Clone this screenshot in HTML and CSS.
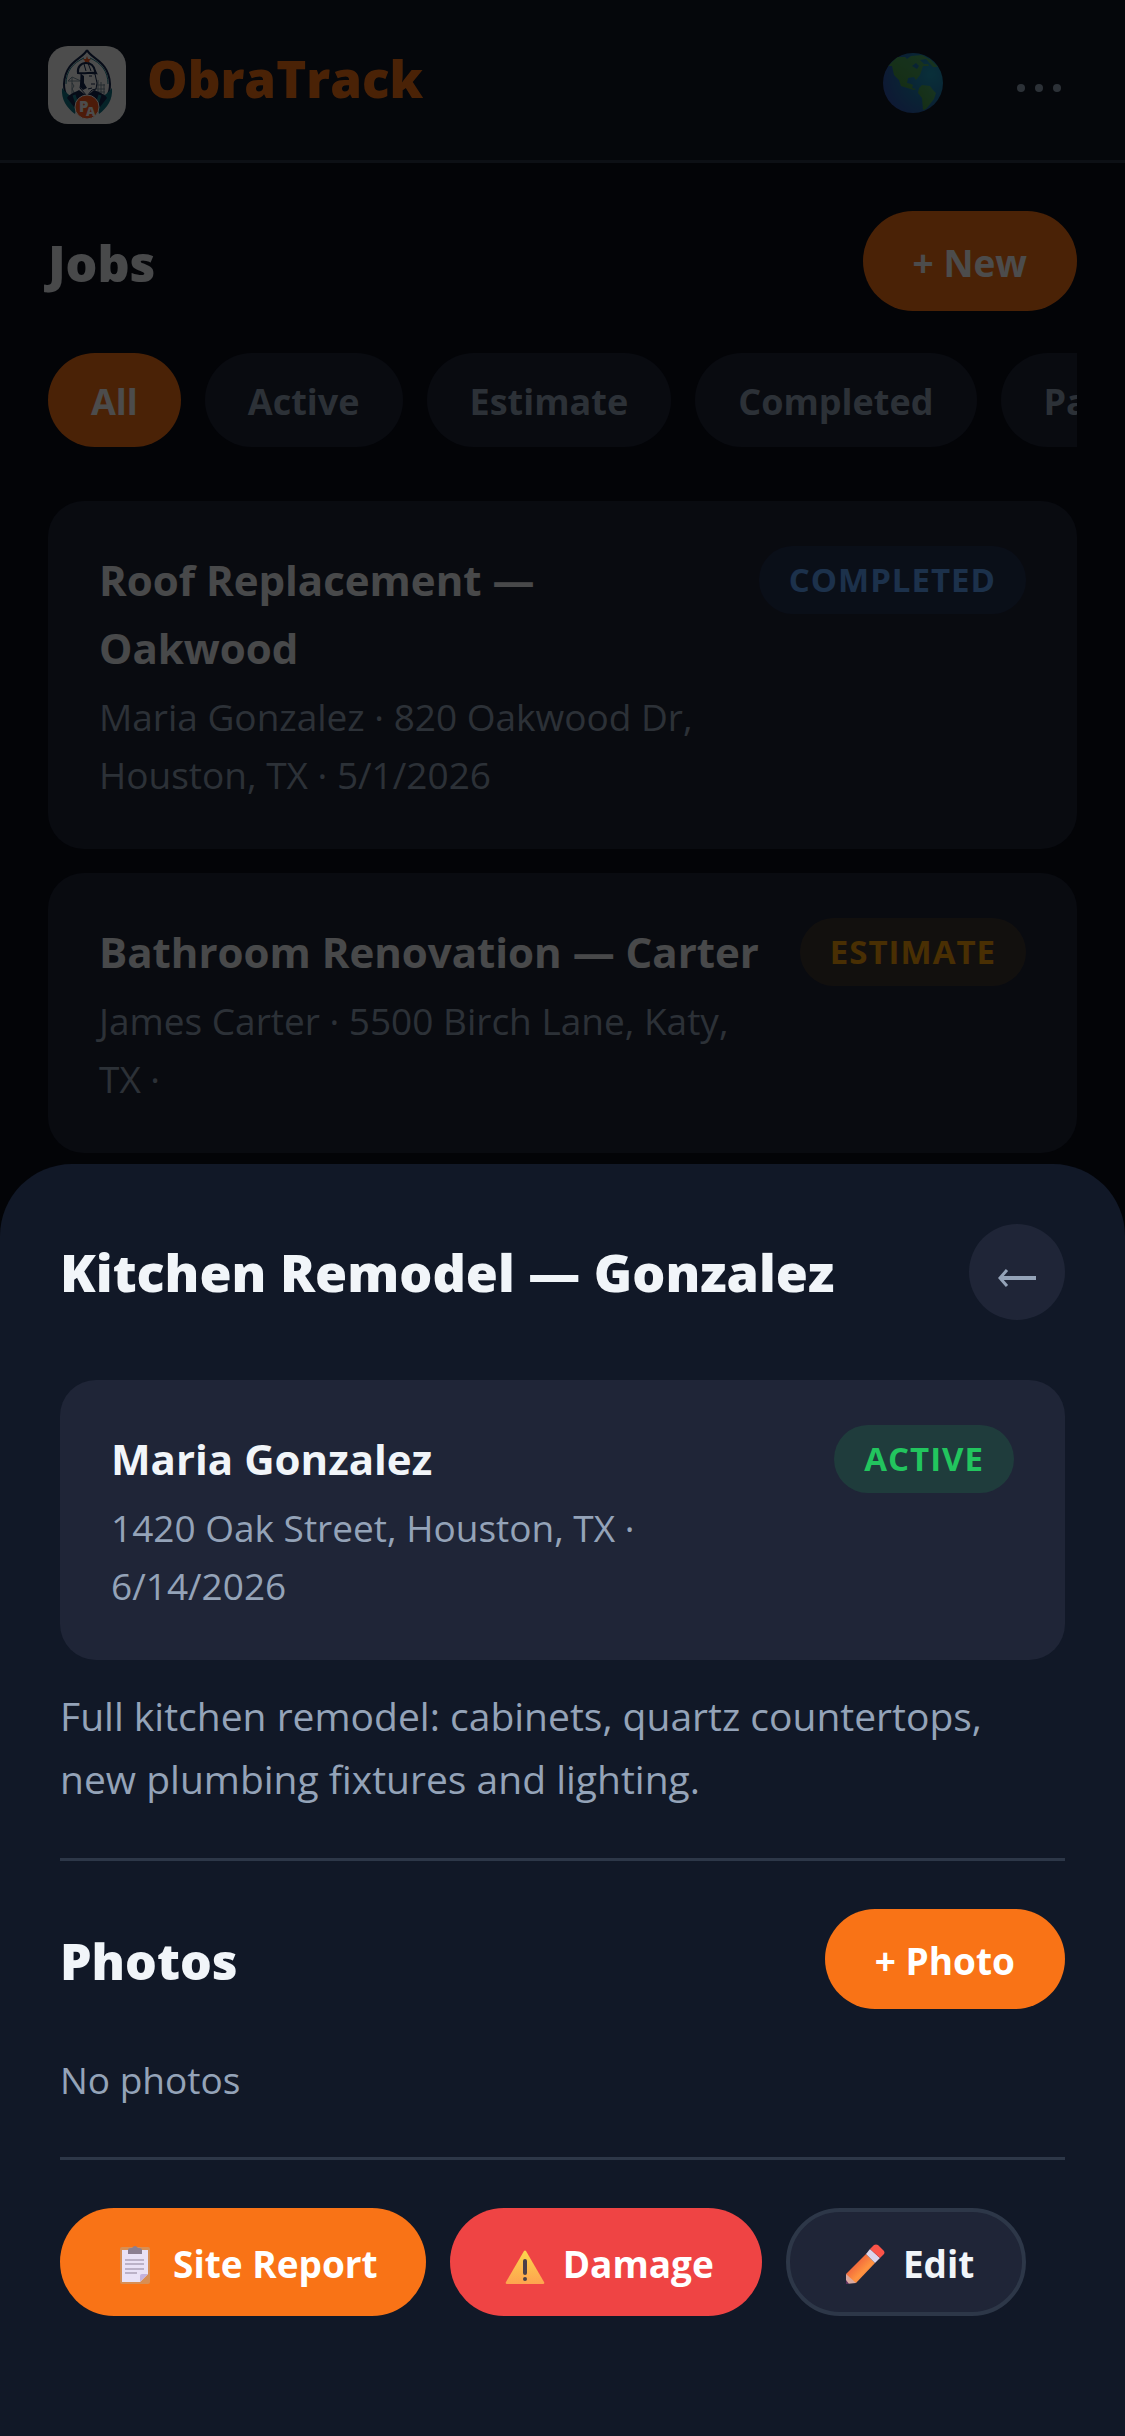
FILE: index.html
```html
<!DOCTYPE html>
<html lang="en">
<head>
  <meta charset="UTF-8">
  <meta name="viewport" content="width=device-width, initial-scale=1.0">
  <title>ObraTrack</title>
  <link rel="stylesheet" href="styles.css">
</head>
<body>
  <header class="header">
    <div class="brand">
      <svg class="logo" viewBox="0 0 78 78" role="img" aria-label="PA logo">
        <rect width="78" height="78" rx="20" fill="#fff"/>
        <!-- pointed frame -->
        <path d="M39 4C35 13 17 15 16 38c0 5 1 9 3 12M39 4c4 9 22 11 23 34 0 5-1 9-3 12" fill="none" stroke="#14264f" stroke-width="2"/>
        <path d="M36 12C25 17 18 25 18 38M42 12c11 5 18 13 18 26" fill="none" stroke="#1d7f90" stroke-width="1"/>
        <path d="M14 42c5 6 11 10 16 13l-3 13C19 62 13 54 14 42zM64 42c-5 6-11 10-16 13l3 13c8-6 14-14 13-26z" fill="#137687"/>
        <path d="M39 10l1 3h3l-2 2 1 3-3-2-3 2 1-3-2-2h3z" fill="#ff5a1f"/>
        <!-- crane and building -->
        <path d="M20 35h13M24 31v18M20 35l4-4 9 4M24 49l2-3-2-3 2-3-2-3M47 37v12M50 34v15M53 36v13M56 38v11M47 39h10M47 43h10M47 46h10" fill="none" stroke="#7d93a3" stroke-width="1"/>
        <!-- worker -->
        <path d="M19 52c2-4 9-6 12-8l8 6 7-6c4 2 11 4 13 8l-7 9H26z" fill="#14264f"/>
        <path d="M33 26v9l-1 7 7 8 5-6 4-1 1-6-2-9z" fill="#fff" stroke="#14264f" stroke-width="1"/>
        <path d="M33 28l3 2v7l3 5-4 2-3-3z" fill="#14264f"/>
        <path d="M41 30h3M43 38h4M40 43l4-1" stroke="#14264f" stroke-width="1"/>
        <path d="M30 27c-1-6 3-10 8-10s8 3 9 8l1 2c-5-1-11 1-18 0z" fill="#fff" stroke="#14264f" stroke-width="2"/>
        <path d="M36 18l2 7M40 17l3 8" stroke="#14264f" stroke-width="1"/>
        <path d="M26 49l3 9M52 49l-3 9" stroke="#1d7f90" stroke-width="3"/>
        <circle cx="39" cy="61" r="12" fill="#ff5a1f" stroke="#fff" stroke-width="1"/>
        <text class="logo-text" x="31" y="66">P</text>
        <text class="logo-text logo-small" x="38" y="70">A</text>
      </svg>
      <span class="brand-name">ObraTrack</span>
    </div>
    <div class="header-actions">
      <button class="icon-btn" aria-label="Language">
        <svg class="globe" viewBox="0 0 60 60">
          <defs>
            <radialGradient id="sea" cx="0.8" cy="0.35" r="0.9">
              <stop offset="0" stop-color="#1f9fc0"/>
              <stop offset="0.5" stop-color="#2076b0"/>
              <stop offset="1" stop-color="#334fae"/>
            </radialGradient>
            <linearGradient id="land" x1="1" y1="0" x2="0" y2="1">
              <stop offset="0" stop-color="#4fb070"/>
              <stop offset="1" stop-color="#479640"/>
            </linearGradient>
            <clipPath id="disc"><circle cx="30" cy="30" r="30"/></clipPath>
          </defs>
          <circle cx="30" cy="30" r="30" fill="url(#sea)"/>
          <g clip-path="url(#disc)" fill="url(#land)">
            <path d="M5 13L14 4l8 0 2 2 4-3 11-1 9 5 7 7h-5l-7-8-6 1 4 4h4l1 2-6 0-3 9-4 5-2-3-6 1-1 5 4 1 2 1-1 3 4 1-2 1-13-4-2-6-5-5-2-9z"/>
            <path d="M36 35l3-3 8 1 3 4 3 3-2 6-8 10-3 1-1-12-4-5z"/>
            <path d="M29 13l4-3 3 3-2 3z" fill="#2076b0"/>
          </g>
        </svg>
      </button>
      <button class="icon-btn more" aria-label="More options">
        <svg class="dots" viewBox="0 0 44 8" fill="#94a3b8">
          <circle cx="4" cy="4" r="4"/><circle cx="22" cy="4" r="4"/><circle cx="40" cy="4" r="4"/>
        </svg>
      </button>
    </div>
  </header>

  <main class="page">
    <div class="section-head">
      <h1>Jobs</h1>
      <button class="btn">+ New</button>
    </div>
    <div class="filters">
      <button class="chip active">All</button>
      <button class="chip">Active</button>
      <button class="chip">Estimate</button>
      <button class="chip">Completed</button>
      <button class="chip">Paid</button>
    </div>
    <div class="card">
      <div class="card-info">
        <h3>Roof Replacement — Oakwood</h3>
        <p>Maria Gonzalez · 820 Oakwood Dr, Houston, TX · 5/1/2026</p>
      </div>
      <span class="badge completed">COMPLETED</span>
    </div>
    <div class="card">
      <div class="card-info">
        <h3>Bathroom Renovation — Carter</h3>
        <p>James Carter · 5500 Birch Lane, Katy, TX ·</p>
      </div>
      <span class="badge estimate">ESTIMATE</span>
    </div>
  </main>

  <div class="overlay">
    <section class="sheet" role="dialog" aria-labelledby="jobTitle">
      <div class="sheet-head">
        <h2 id="jobTitle">Kitchen Remodel — Gonzalez</h2>
        <button class="back" aria-label="Back">
          <svg class="arrow" viewBox="0 0 38 20" fill="none" stroke="#94a3b8">
            <path d="M2 10h36" stroke-width="4"/>
            <path d="M9 2L2 10l7 8" stroke-width="3"/>
          </svg>
        </button>
      </div>

      <div class="card">
        <div class="card-info">
          <h3>Maria Gonzalez</h3>
          <p>1420 Oak Street, Houston, TX · 6/14/2026</p>
        </div>
        <span class="badge in-progress">ACTIVE</span>
      </div>
      <p class="description">Full kitchen remodel: cabinets, quartz countertops, new plumbing fixtures and lighting.</p>

      <hr>

      <div class="section-head">
        <h2 class="section-title">Photos</h2>
        <button class="btn">+ Photo</button>
      </div>
      <p class="empty">No photos</p>

      <hr>

      <div class="actions">
        <button class="btn large">
          <svg class="emoji" viewBox="0 0 40 40">
            <rect x="5" y="3" width="30" height="37" rx="2" fill="#d98e52"/>
            <path d="M7 6h26v24l-8 8H7z" fill="#e9e2f6"/>
            <path d="M33 30l-8 8v-6q0-2 2-2z" fill="#c5b3dd"/>
            <path d="M13 10V6q0-2 3-2h1q3-4 6 0h1q3 0 3 2v4z" fill="#8b7f91"/>
            <path d="M10 16h19M10 20h19M10 25h19M10 29h12" stroke="#8d8299" stroke-width="1"/>
          </svg>
          Site Report
        </button>
        <button class="btn large danger">
          <svg class="emoji" viewBox="0 0 40 40">
            <defs>
              <linearGradient id="warn" x1="0" y1="0" x2="0" y2="1">
                <stop offset="0" stop-color="#fcd64d"/>
                <stop offset="1" stop-color="#fea34f"/>
              </linearGradient>
            </defs>
            <path d="M19 7q1-1 2 0l18 31q1 2-1 2H2q-2 0-1-2z" fill="url(#warn)"/>
            <path d="M20 17v12" stroke="#4a4048" stroke-width="4" stroke-linecap="round"/>
            <circle cx="20" cy="35" r="2" fill="#4a4048"/>
          </svg>
          Damage
        </button>
        <button class="btn large outline">
          <svg class="emoji" viewBox="0 0 40 40">
            <defs>
              <linearGradient id="wood" x1="0" y1="0" x2="1" y2="1">
                <stop offset="0.3" stop-color="#f0643c"/>
                <stop offset="0.6" stop-color="#ff9440"/>
                <stop offset="1" stop-color="#e8603f"/>
              </linearGradient>
            </defs>
            <path d="M1 30L21 10l9 9-19 20-7-2z" fill="url(#wood)"/>
            <path d="M1 30l10 9-10 1z" fill="#d9a9a0"/>
            <path d="M1 36l3 4H1z" fill="#5b2f5e"/>
            <path d="M21 10l4-5 10 9-5 5z" fill="#dcd5ea"/>
            <path d="M25 5l4-4q2-1 4 0l6 6q1 2 0 3l-4 4z" fill="#fb5449"/>
          </svg>
          Edit
        </button>
      </div>
    </section>
  </div>
</body>
</html>
```
FILE: styles.css
```css
* {
  box-sizing: border-box;
  margin: 0;
  padding: 0;
}

body {
  background: #0a0e1a;
  color: #f1f5f9;
  font-family: "Segoe UI", "Open Sans", sans-serif;
  font-size: 37px;
  line-height: 58px;
  min-height: 100vh;
}

button {
  border: none;
  font-family: inherit;
  cursor: pointer;
}

svg {
  display: block;
}

/* header */
.header {
  display: flex;
  align-items: center;
  justify-content: space-between;
  padding: 40px 48px;
  background: #111827;
  border-bottom: 3px solid #2d3748;
}

.brand {
  display: flex;
  align-items: center;
  gap: 21px;
  height: 80px;
  padding-top: 10px;
}

.logo {
  width: 78px;
  height: 78px;
}

.logo-text {
  font-size: 15px;
  font-weight: 800;
  fill: #fff;
}

.logo-small {
  font-size: 13px;
}

.brand-name {
  padding-bottom: 14px;
  color: #f97316;
  font-size: 51px;
  font-weight: 800;
}

.header-actions {
  display: flex;
  align-items: center;
  gap: 58px;
  padding-top: 6px;
}

.icon-btn {
  background: none;
}

.more {
  padding: 10px 16px 0;
}

.globe {
  width: 60px;
  height: 60px;
}

.dots {
  width: 44px;
  height: 8px;
}

/* jobs list */
.page {
  padding: 48px;
}

.section-head {
  display: flex;
  align-items: center;
  justify-content: space-between;
}

h1,
.sheet .section-title {
  padding-top: 4px;
  font-size: 50px;
  font-weight: 800;
}

.btn {
  display: flex;
  align-items: center;
  justify-content: center;
  padding: 22px 50px 18px;
  min-height: 100px;
  border-radius: 60px;
  background: #f97316;
  color: #fff;
  font-size: 37px;
  font-weight: 700;
  line-height: 58px;
}

.filters {
  display: flex;
  gap: 24px;
  margin: 42px 0 54px;
  overflow: hidden;
}

.chip {
  flex-shrink: 0;
  padding: 20px 43px 16px;
  border-radius: 60px;
  background: #1f2537;
  color: #94a3b8;
  font-size: 36px;
  font-weight: 700;
  line-height: 58px;
}

.chip.active {
  background: #f97316;
  color: #fff;
}

.card {
  display: flex;
  align-items: flex-start;
  justify-content: space-between;
  gap: 30px;
  padding: 45px 51px;
  margin-bottom: 24px;
  border-radius: 36px;
  background: #1f2537;
}

.card h3 {
  margin-bottom: 6px;
  font-size: 42px;
  font-weight: 700;
  line-height: 68px;
}

.card p,
.empty {
  color: #94a3b8;
}

.badge {
  padding: 9px 30px;
  border-radius: 60px;
  font-size: 33px;
  font-weight: 700;
  line-height: 50px;
  letter-spacing: 1px;
}

.completed {
  background: rgba(59, 130, 246, 0.15);
  color: #60a5fa;
}

.estimate {
  background: rgba(245, 158, 11, 0.15);
  color: #f59e0b;
}

.in-progress {
  background: rgba(34, 197, 94, 0.15);
  color: #22c55e;
}

/* job details */
.overlay {
  position: fixed;
  inset: 0;
  display: flex;
  align-items: flex-end;
  background: rgba(0, 0, 0, 0.7);
}

.sheet {
  width: 100%;
  padding: 60px 60px 120px;
  border-radius: 72px 72px 0 0;
  background: #111827;
}

.sheet-head {
  display: flex;
  align-items: center;
  justify-content: space-between;
  margin-bottom: 60px;
}

.sheet h2 {
  font-size: 52px;
  font-weight: 800;
}

.back {
  display: flex;
  align-items: center;
  justify-content: center;
  width: 96px;
  height: 96px;
  padding-top: 12px;
  border-radius: 50%;
  background: #1f2537;
}

.arrow {
  width: 38px;
  height: 20px;
}

.description {
  color: #94a3b8;
  font-size: 39px;
  line-height: 63px;
}

hr {
  margin: 48px 0;
  border: none;
  border-top: 3px solid #2d3748;
}

.empty {
  margin-top: 42px;
}

.actions {
  display: flex;
  gap: 24px;
}

.large {
  gap: 18px;
  min-height: 108px;
  padding: 22px 48px 18px 55px;
}

.danger {
  background: #ef4444;
}

.outline {
  border: 4px solid #2d3748;
  background: #1f2537;
  color: #f1f5f9;
}

.emoji {
  width: 40px;
  height: 40px;
}
```
